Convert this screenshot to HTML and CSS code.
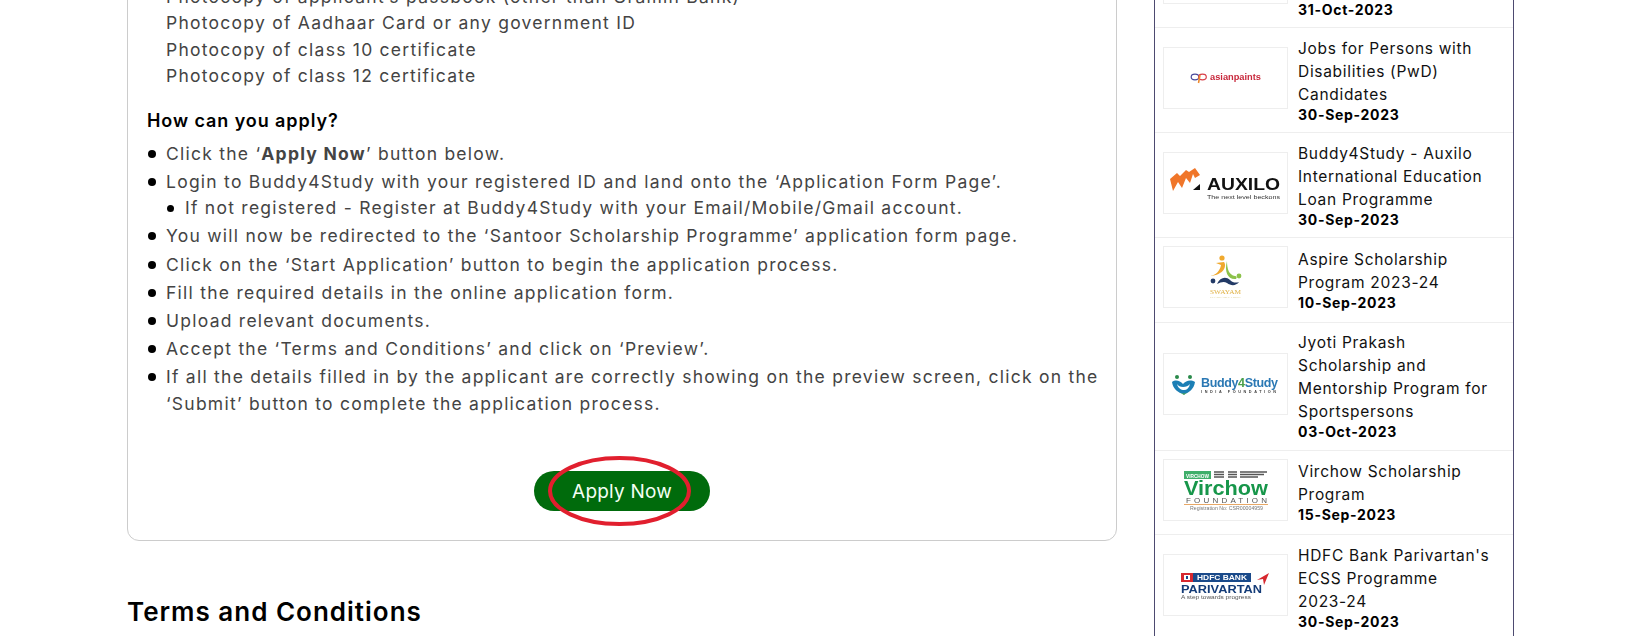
FILE: index.html
```html
<!DOCTYPE html>
<html lang="en">
<head>
<meta charset="utf-8">
<title>Santoor Scholarship Programme</title>
<link rel="stylesheet" href="styles.css">
</head>
<body>
<div class="page">
  <main class="main">
    <section class="card">
      <p class="docs">Photocopy of applicant’s passbook (other than Gramin Bank)<br>Photocopy of Aadhaar Card or any government ID<br>Photocopy of class 10 certificate<br>Photocopy of class 12 certificate</p>
      <h4 class="how">How can you apply?</h4>
      <ul class="steps">
        <li>Click the ‘<b>Apply Now</b>’ button below.</li>
        <li>Login to Buddy4Study with your registered ID and land onto the ‘Application Form Page’.
          <ul class="sub"><li>If not registered - Register at Buddy4Study with your Email/Mobile/Gmail account.</li></ul>
        </li>
        <li>You will now be redirected to the ‘Santoor Scholarship Programme’ application form page.</li>
        <li>Click on the ‘Start Application’ button to begin the application process.</li>
        <li>Fill the required details in the online application form.</li>
        <li>Upload relevant documents.</li>
        <li>Accept the ‘Terms and Conditions’ and click on ‘Preview’.</li>
        <li>If all the details filled in by the applicant are correctly showing on the preview screen, click on the ‘Submit’ button to complete the application process.</li>
      </ul>
      <div class="cta">
        <a class="apply" href="#">Apply Now
          <svg class="ring" viewBox="0 0 143 70" aria-hidden="true"><ellipse cx="71.5" cy="35" rx="69.5" ry="33" fill="none" stroke="#e11f2e" stroke-width="4"/></svg>
        </a>
      </div>
    </section>
    <h2 class="terms">Terms and Conditions</h2>
  </main>

  <aside class="side">
    <article class="row">
      <div class="logo"></div>
      <div class="info"><h5>Scholarship Programme for Undergraduate Students 2023-24</h5><time>31-Oct-2023</time></div>
    </article>

    <article class="row">
      <div class="logo">
        <svg viewBox="0 0 123 60">
          <ellipse cx="31" cy="29" rx="3.800" ry="2.800" fill="none" stroke="#4a4a9a" stroke-width="1.200"/>
          <ellipse cx="38.500" cy="29" rx="3.800" ry="2.800" fill="none" stroke="#d8404a" stroke-width="1.200"/>
          <path d="M36 27l-1.500 8" fill="none" stroke="#ef8a2c" stroke-width="1.500"/>
          <text x="46" y="32" class="t-asian" textLength="51" lengthAdjust="spacingAndGlyphs">asianpaints</text>
        </svg>
      </div>
      <div class="info"><h5>Jobs for Persons with Disabilities (PwD) Candidates</h5><time>30-Sep-2023</time></div>
    </article>

    <article class="row">
      <div class="logo">
        <svg viewBox="0 0 123 60">
          <path d="M6 26l7-6 3 3 6-6 3 2 6-4 5 7-5 3-2-4-3 9-4-5-4 10-4-6-5 9z" fill="#f0762a"/>
          <path d="M29 37l7-6v6z" fill="#111"/>
          <text x="43" y="37" class="t-auxilo" textLength="73" lengthAdjust="spacingAndGlyphs">AUXILO</text>
          <text x="43" y="46" class="t-auxsub" textLength="73" lengthAdjust="spacingAndGlyphs">The next level beckons</text>
        </svg>
      </div>
      <div class="info"><h5>Buddy4Study - Auxilo International Education Loan Programme</h5><time>30-Sep-2023</time></div>
    </article>

    <article class="row">
      <div class="logo">
        <svg viewBox="0 0 123 60">
          <circle cx="58" cy="11" r="2.600" fill="#f0a92e"/>
          <path d="M46 29c6-1 10-5 11-11l-5-2 8-1c3 4 0 13-14 14z" fill="#f0a92e"/>
          <path d="M63 14c0 8 2 14 8 15 2 0 2 2 1 3-8 1-12-7-9-18z" fill="#8cc24a"/>
          <circle cx="75" cy="29" r="2.400" fill="#8cc24a"/>
          <circle cx="49" cy="34" r="2.400" fill="#223a66"/>
          <path d="M53 37c3-7 9-8 13-4 3 3 6 3 9 2-3 4-8 4-12 1-3-2-6-1-10 1z" fill="#223a66"/>
          <text x="46" y="47" class="t-swayam" textLength="31" lengthAdjust="spacingAndGlyphs">SWAYAM</text>
          <text x="46" y="51" class="t-swsub" textLength="31" lengthAdjust="spacingAndGlyphs">CHARITABLE TRUST</text>
        </svg>
      </div>
      <div class="info"><h5>Aspire Scholarship Program 2023-24</h5><time>10-Sep-2023</time></div>
    </article>

    <article class="row">
      <div class="logo">
        <svg viewBox="0 0 123 60">
          <circle cx="13" cy="23" r="2" fill="#2a8a4a"/><circle cx="26" cy="23" r="2" fill="#2a8a4a"/>
          <path d="M8 28c4-3 8-1 11 2 3-3 7-5 12-2-1 7-6 11-11 12-6-1-11-5-12-12z" fill="#1c7fb5"/>
          <path d="M13 30c2 4 10 4 13 0-1 4-3 6-6 6s-6-2-7-6z" fill="#fff"/>
          <path d="M15 38c3 2 6 2 9 0l-4 3z" fill="#3a9a4a"/>
          <text x="37" y="33" class="t-b4s" textLength="77">Buddy<tspan fill="#4aa04a">4</tspan>Study</text>
          <text x="37" y="39" class="t-b4sub" textLength="75">INDIA FOUNDATION</text>
        </svg>
      </div>
      <div class="info"><h5>Jyoti Prakash Scholarship and Mentorship Program for Sportspersons</h5><time>03-Oct-2023</time></div>
    </article>

    <article class="row">
      <div class="logo">
        <svg viewBox="0 0 123 60">
          <rect x="20" y="11" width="27" height="8" fill="#3fae6a"/>
          <text x="22" y="17.500" class="t-vtag" textLength="23" lengthAdjust="spacingAndGlyphs">VIRCHOW</text>
          <path d="M50 12h10M50 14.500h10M50 17h10M64 12h9M64 14.500h9M64 17h9M76 12h27M76 14.500h24M76 17h18" stroke="#555" stroke-width="1.300"/>
          <text x="20" y="35" class="t-vir" textLength="84" lengthAdjust="spacingAndGlyphs">Virchow</text>
          <text x="22" y="43" class="t-vfound" textLength="81">FOUNDATION</text>
          <rect x="20" y="44" width="84" height="1" fill="#e8a866"/>
          <text x="26" y="49.500" class="t-vreg" textLength="73" lengthAdjust="spacingAndGlyphs">Registration No: CSR00004959</text>
        </svg>
      </div>
      <div class="info"><h5>Virchow Scholarship Program</h5><time>15-Sep-2023</time></div>
    </article>

    <article class="row">
      <div class="logo">
        <svg viewBox="0 0 123 60">
          <rect x="17" y="18" width="12" height="9" fill="#d7282f"/>
          <rect x="20" y="20" width="6" height="5" fill="#fff"/>
          <rect x="22" y="21" width="2" height="3" fill="#1a4a8a"/>
          <rect x="29" y="18" width="58" height="9" fill="#1a4a8a"/>
          <text x="33" y="25" class="t-hdfc" textLength="50" lengthAdjust="spacingAndGlyphs">HDFC BANK</text>
          <text x="17" y="37.500" class="t-pari" textLength="81" lengthAdjust="spacingAndGlyphs">PARIVARTAN</text>
          <text x="17" y="44" class="t-step" textLength="70" lengthAdjust="spacingAndGlyphs">A step towards progress</text>
          <path d="M105 18l-12 7 6-1 1 6z" fill="#d7282f"/>
        </svg>
      </div>
      <div class="info"><h5>HDFC Bank Parivartan's ECSS Programme <span class="nb">2023-24</span></h5><time>30-Sep-2023</time></div>
    </article>
  </aside>
</div>
</body>
</html>
```
FILE: styles.css
```css
* { box-sizing: border-box; }
html, body { margin: 0; height: 636px; overflow: hidden; background: #fff; }
body { font-family: Inter, "Liberation Sans", sans-serif; color: #444; }

.page { display: flex; align-items: flex-start; margin-top: -78px; padding-left: 127px; }
.main { width: 990px; flex: none; }

.card { border: 1px solid #ccc; border-radius: 12px; padding: 61px 8px 29px 19px; }
.docs { margin: 0 0 18px; padding-left: 19px; font-size: 17.500px; line-height: 26.400px; letter-spacing: 1.250px; }
.how { margin: 0 0 7px; font-size: 18px; line-height: 26px; font-weight: 600; color: #000; letter-spacing: .92px; }

.steps, .sub { list-style: none; margin: 0; padding: 0 0 0 19px; font-size: 17.500px; line-height: 26.400px; letter-spacing: 1.250px; }
.steps > li { margin-bottom: 1.800px; position: relative; }
.sub li { position: relative; }
.steps > li::before, .sub li::before { content: ""; position: absolute; left: -18px; top: 9px; width: 8px; height: 8px; border-radius: 50%; background: #000; }
.sub li::before { width: 7px; height: 7px; top: 10px; }
.steps b { font-weight: 700; }

.cta { display: flex; justify-content: center; margin-top: 54px; margin-right: 11px; }
.apply { position: relative; display: block; width: 176px; height: 40px; border-radius: 20px; background: #006b0c; color: #f4fff4; text-align: center; text-decoration: none; font-size: 19px; line-height: 42px; letter-spacing: .2px; }
.ring { position: absolute; left: 14px; top: -15px; width: 143px; height: 70px; }

.terms { margin: 53px 0 0; font-size: 26px; line-height: 36px; font-weight: 600; color: #000; letter-spacing: 1px; }

.side { width: 360px; flex: none; margin: 1px 0 0 37px; border-left: 1px solid #4d4a70; border-right: 1px solid #4d4a70; }
.row { display: flex; align-items: center; min-height: 84.500px; padding: 8px 0; border-bottom: 1px solid #eee; }
.logo { width: 125px; height: 62px; flex: none; margin: 0 9px 5px 8px; border: 1px solid #eee; background: #fff; }
.logo svg { display: block; width: 123px; height: 60px; filter: blur(.25px); }
.info { flex: 1; min-width: 0; padding: 0 16px 0 1px; }
.info h5 { margin: 0; padding-top: .5px; font-size: 15.500px; line-height: 23px; font-weight: 400; color: #111; letter-spacing: .7px; }
.info time { display: block; padding-bottom: 1.500px; font-size: 14px; line-height: 17px; font-weight: 700; color: #000; letter-spacing: .7px; }
.nb { white-space: nowrap; }

.logo text { font-family: "Liberation Sans", sans-serif; }
.t-asian { font-size: 9px; font-weight: 700; fill: #c8283c; }
.t-auxilo { font-size: 16px; font-weight: 700; fill: #111; }
.t-auxsub { font-size: 6px; fill: #333; }
.logo .t-swayam { font-family: "Liberation Serif", serif; font-size: 6px; fill: #e0b040; }
.logo .t-swsub { font-family: "Liberation Serif", serif; font-size: 2.500px; fill: #d8c880; }
.t-b4s { font-size: 12.500px; font-weight: 700; fill: #2a78b4; }
.t-b4sub { font-size: 3.800px; font-weight: 700; fill: #444; }
.t-vtag { font-size: 5px; font-weight: 700; fill: #fff; }
.t-vir { font-size: 20.500px; font-weight: 700; fill: #17964a; }
.t-vfound { font-size: 8px; font-weight: 400; fill: #555; }
.t-vreg { font-size: 4.500px; fill: #777; }
.t-hdfc { font-size: 7px; font-weight: 700; fill: #fff; }
.t-pari { font-size: 11px; font-weight: 700; fill: #143c78; }
.t-step { font-size: 6px; fill: #555; }
```
